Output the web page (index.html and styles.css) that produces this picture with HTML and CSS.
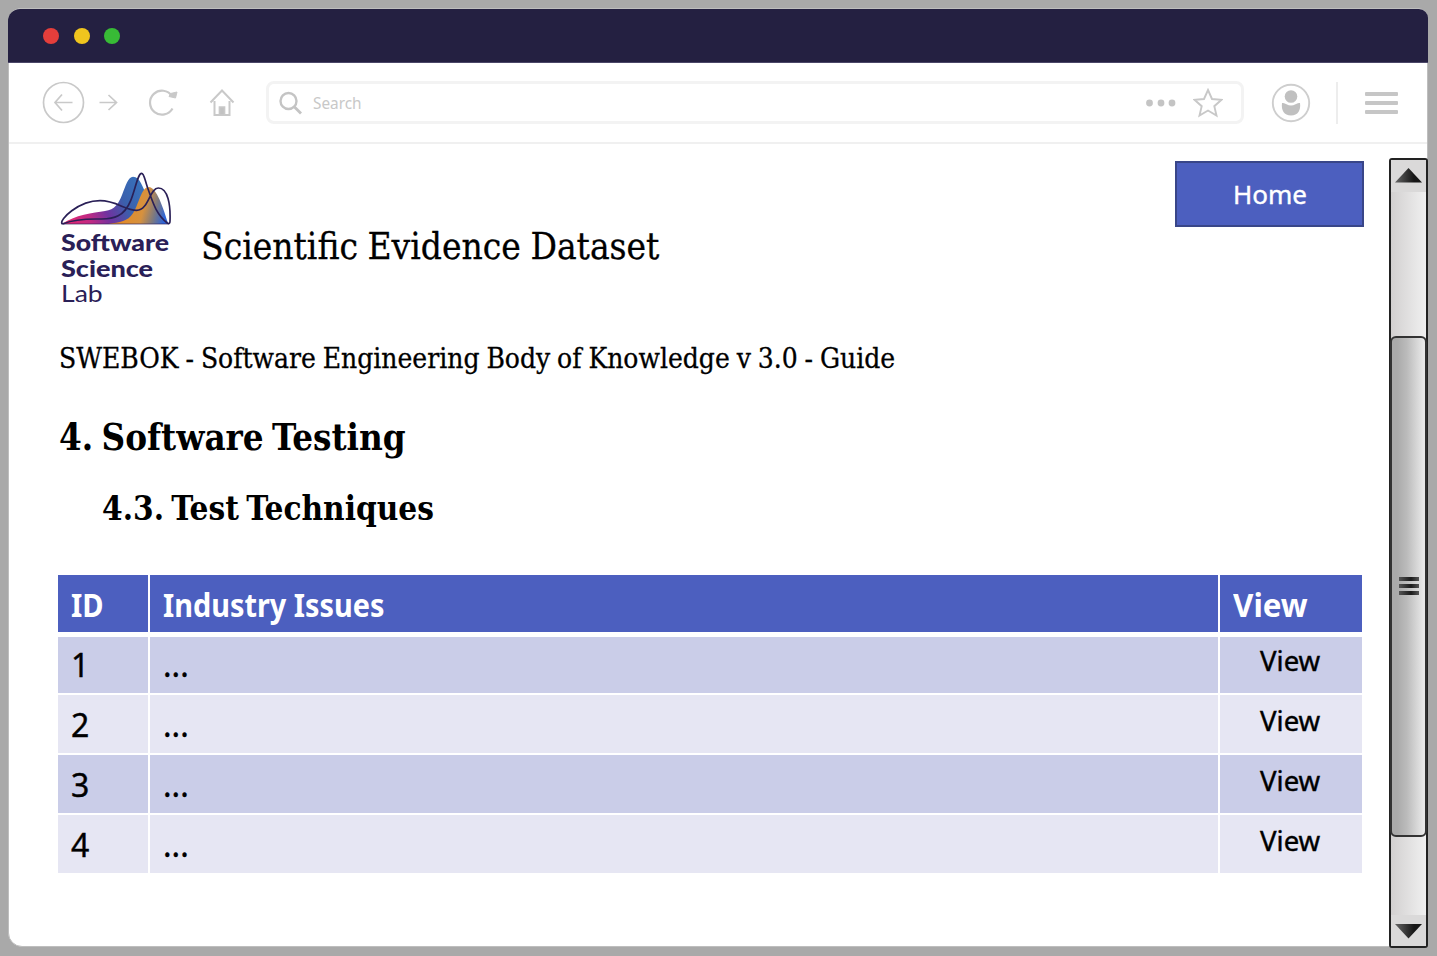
FILE: index.html
```html
<!DOCTYPE html>
<html lang="en">
<head>
<meta charset="utf-8">
<title>Scientific Evidence Dataset</title>
<link rel="stylesheet" href="styles.css">
</head>
<body>
<div class="window">
  <div class="titlebar"><i class="dot red"></i><i class="dot yellow"></i><i class="dot green"></i></div>
  <div class="toolbar">
    <svg class="nav" width="200" height="46" viewBox="40 80 200 46" fill="none" stroke="#c9c9c9" stroke-width="1.7">
      <circle cx="63.5" cy="102.500" r="20"/>
      <path d="M72.500 102.500H55.500M62 94.500l-7 8 7 8M99.500 102.500h16.500M108.500 95l8 7.500-8 7.500"/>
      <path d="M172.500 108.500a12 12 0 1 1-.5-12.500" stroke-width="2.200"/>
      <path d="M169 96.500l1.500-3 6.500-1.500-1.500 6z" fill="#c9c9c9" stroke-width="1"/>
      <path d="M210.500 102.500l11.500-12 11.500 12M214.500 101v14h15v-14" stroke-width="2"/>
      <path d="M219.500 107h5v8h-5z" fill="#c2c2c2"/>
    </svg>
    <div class="search">
      <svg width="24" height="24" viewBox="0 0 24 24" fill="none" stroke="#c4c4c4"><circle cx="9.500" cy="10" r="8" stroke-width="2.400"/><path d="M15.500 16l6.500 6.500" stroke-width="2.800"/></svg>
      <span class="placeholder"><span class="fit ph">Search</span></span>
      <svg class="more" width="32" height="8" viewBox="0 0 32 8" fill="#c4c4c4"><circle cx="4.500" cy="4" r="3.400"/><circle cx="16" cy="4" r="3.400"/><circle cx="27" cy="4" r="3.400"/></svg>
      <svg width="30" height="30" viewBox="0 0 30 30" fill="none" stroke="#c8c8c8" stroke-width="1.900"><path d="M15 2l4 9 9.500.8-7.200 6.400 2.200 9.300L15 22.500l-8.500 5 2.200-9.300L1.500 11.800 11 11z"/></svg>
    </div>
    <svg class="user" width="40" height="40" viewBox="0 0 40 40" fill="#c0c0c0"><circle cx="20" cy="20" r="18.200" fill="none" stroke="#cecece" stroke-width="1.900"/><circle cx="20" cy="13.500" r="6.300"/><path d="M11 20c1 0 3 .3 4.500 1.200 3 1.800 6 1.800 9 0C26 20.300 28 20 29 20c1 7-2 12.500-9 12.500S10 27 11 20z"/></svg>
    <i class="divider"></i>
    <div class="menu"><i></i><i></i><i></i></div>
  </div>
  <div class="body">
    <main class="page">
      <header class="head">
        <div class="logo">
          <svg width="114" height="56" viewBox="60 30 342 168">
            <defs>
              <linearGradient id="ridge" x1="65" y1="192" x2="310" y2="70" gradientUnits="userSpaceOnUse"><stop offset="0" stop-color="#f0286e"/><stop offset=".3" stop-color="#c02a83"/><stop offset=".5" stop-color="#7032a0"/><stop offset=".72" stop-color="#3b5fac"/><stop offset="1" stop-color="#3773bd"/></linearGradient>
              <linearGradient id="peak" x1="250" y1="130" x2="376" y2="165" gradientUnits="userSpaceOnUse"><stop offset="0" stop-color="#e58a24"/><stop offset=".48" stop-color="#d6913e"/><stop offset=".75" stop-color="#7c7980"/><stop offset="1" stop-color="#2f65d8"/></linearGradient>
            </defs>
            <path fill="url(#ridge)" d="M65 192C105 165 160 158 195 153C225 149 235 132 246 105C257 76 265 50 279 50C301 50 307 81 322 110L355 192z"/>
            <path fill="url(#peak)" d="M205 192C240 187 263 185 279 160C295 137 304 81 326 81C350 81 370 145 385 192z"/>
            <g fill="none" stroke="#2a2057" stroke-width="5" stroke-linejoin="round"><path d="M66 191C57 180 115 122 180 122C230 122 255 151 290 151C326 151 329 84 355 84C384 84 392 135 390 184Q390 194 382 189C345 160 336 118 323 84C313 55 312 40 305 40C293 40 287 85 272 122C253 169 222 178 180 177C130 176 100 179 70 191z"/><path d="M68 192H386" stroke-width="2"/></g>
          </svg>
          <div class="brand"><b><span class="fit b1">Software</span></b><b><span class="fit b2">Science</span></b><span class="lab"><span class="fit b3">Lab</span></span></div>
        </div>
        <div class="title"><span class="fit t1">Scientific Evidence Dataset</span></div>
        <a class="home"><span class="fit ho">Home</span></a>
      </header>
      <p class="guide"><span class="fit t2">SWEBOK - Software Engineering Body of Knowledge v 3.0 - Guide</span></p>
      <h1><span class="fit t3">4. Software Testing</span></h1>
      <h2><span class="fit t4">4.3. Test Techniques</span></h2>
      <div class="table">
        <div class="row th"><div><span class="fit c1">ID</span></div><div><span class="fit c2">Industry Issues</span></div><div><span class="fit c3">View</span></div></div>
        <div class="row odd first"><div>1</div><div class="dots">...</div><div class="view"><span class="fit vw">View</span></div></div>
        <div class="row"><div>2</div><div class="dots">...</div><div class="view"><span class="fit vw">View</span></div></div>
        <div class="row odd"><div>3</div><div class="dots">...</div><div class="view"><span class="fit vw">View</span></div></div>
        <div class="row"><div>4</div><div class="dots">...</div><div class="view"><span class="fit vw">View</span></div></div>
      </div>
    </main>
    <div class="scroll">
      <svg class="arrow" width="35" height="32" viewBox="0 0 35 32"><defs><linearGradient id="a"><stop offset="0" stop-color="#666"/><stop offset=".7" stop-color="#161616"/></linearGradient></defs><path d="M4 22.500L17.500 8 31 22.500z" fill="url(#a)"/></svg>
      <div class="track"></div>
      <div class="thumb"><i></i><i></i><i></i></div>
      <div class="track"></div>
      <svg class="arrow" width="35" height="31" viewBox="0 0 35 31"><path d="M4 9L17.500 23.500 31 9z" fill="url(#a)"/></svg>
    </div>
  </div>
</div>
</body>
</html>
```
FILE: styles.css
```css
* { box-sizing: border-box; margin: 0; padding: 0; }
body { width: 1437px; height: 956px; overflow: hidden; padding: 8px 9px 9px 8px; background: #a9a9a9; color: #000; font-family: "Noto Sans", sans-serif; }
i { display: block; }
svg { display: block; flex: none; }
.fit { display: inline-block; transform-origin: left; white-space: nowrap; }
.t1 { transform: scaleX(.993); word-spacing: -1px; }
.t2 { transform: scaleX(1.033); word-spacing: -1px; }
.t3 { transform: scaleX(.983); word-spacing: -3px; }
.t4 { transform: scaleX(1); word-spacing: -3px; }
.c1 { transform: scaleX(.88); }
.c2 { transform: scaleX(.874); }
.c3 { transform: scaleX(.95); }
.b1 { transform: scaleX(1.137); }
.b2 { transform: scaleX(1.15); }
.b3 { transform: scaleX(1.13); }
.ph { transform: scaleX(.96); }
.vw { transform: scaleX(1.02); }
.window { width: 1420px; height: 939px; border: 1px solid #bebebe; border-radius: 13px 10px 14px 14px; background: #fff; display: flex; flex-direction: column; }
.titlebar { height: 54px; flex: none; margin: 0 -1px; background: #242041; border-bottom: 1px solid #4b4768; border-radius: 12px 9px 0 0; display: flex; gap: 14.500px; align-items: center; padding: 0 0 0 35px; }
.dot { width: 16px; height: 16px; border-radius: 50%; }
.red { background: #e53e3b; }
.yellow { background: #f0c51e; }
.green { background: #38bb36; }
.toolbar { height: 81px; flex: none; display: flex; align-items: center; border-bottom: 2px solid #f0f0f0; padding-left: 31px; }
.search { width: 978px; height: 43px; margin-left: 26px; border: 3px solid #f3f3f3; border-radius: 8px; display: flex; align-items: center; padding: 0 18px 0 10px; }
.placeholder { font-size: 16px; color: #c8c8c8; margin-left: 10px; flex: 1; }
.more { margin-right: 16px; }
.user { margin-left: 27px; }
.divider { width: 2px; height: 42px; margin-left: 25px; background: #ededed; }
.menu { width: 33px; margin-left: 27px; display: grid; gap: 5px; }
.menu i { height: 4px; background: #c6c6c6; border-radius: 1px; }
.body { flex: 1; display: flex; min-height: 0; }
.page { width: 1380px; flex: none; padding-left: 49px; }
.head { height: 172px; display: flex; }
.logo { width: 143px; padding: 26px 0 0 2px; }
.brand { display: flex; flex-direction: column; font: 23.500px/25.500px Lato, sans-serif; color: #2a2057; padding: 4px 0 0 1px; }
.brand b { font-weight: 900; }
.title { width: 974px; padding-top: 77px; font: 37px/52px "DejaVu Serif Condensed", "DejaVu Serif", serif; -webkit-text-stroke: .3px #000; }
.home { width: 189px; height: 66px; margin-top: 17px; border: 2px solid #394688; background: #4c5fbf; color: #fff; font-size: 26px; line-height: 62px; padding-left: 56px; -webkit-text-stroke: .4px #fff; }
.guide { font: 27px/40px "DejaVu Serif Condensed", "DejaVu Serif", serif; padding: 23px 0 0 1px; -webkit-text-stroke: .3px #000; }
h1 { font: bold 37px/48px "DejaVu Serif Condensed", "DejaVu Serif", serif; padding: 34px 0 0 1px; }
h2 { font: bold 33px/44px "DejaVu Serif Condensed", "DejaVu Serif", serif; padding: 26px 0 0 44px; }
.table { margin-top: 44px; width: 1304px; display: grid; gap: 2px; font-size: 32px; -webkit-text-stroke: .4px #000; }
.row { display: grid; grid-template-columns: 90px 1068px 142px; grid-template-rows: 100%; gap: 2px; height: 58px; line-height: 60px; }
.row > div { background: #e6e6f3; padding-left: 13px; }
.row.odd > div { background: #cacde8; }
.row.th { height: 57px; line-height: 60px; font-weight: 700; font-size: 33px; color: #fff; margin-bottom: 3px; -webkit-text-stroke: 0; }
.row.th > div { background: #4c5fbf; }
.row.first { height: 56px; line-height: 56px; }
.row > .view { font-size: 27px; line-height: 52px; padding-left: 40px; }
.row.first > .view { line-height: 48px; }
.scroll { width: 39px; height: 790px; flex: none; margin: 14px 0 0 0; border: 2px solid #222; border-radius: 3px; background: linear-gradient(90deg, #d2d0d0, #f0f0f0); display: flex; flex-direction: column; }
.arrow { background: #dad9d9; }
.track { height: 145px; flex: auto; }
.scroll .track + .thumb + .track { height: 79px; }
.thumb { height: 501px; flex: none; border: 2px solid #333; border-radius: 6px; margin: 0 -1px; background: linear-gradient(90deg, #aaa 15%, #bbb 45%, #e8e8e8 95%); display: flex; flex-direction: column; align-items: center; justify-content: center; gap: 3px; }
.thumb i { width: 20px; height: 4px; background: linear-gradient(90deg, #555, #1b1b1b 60%, #555); }
```
